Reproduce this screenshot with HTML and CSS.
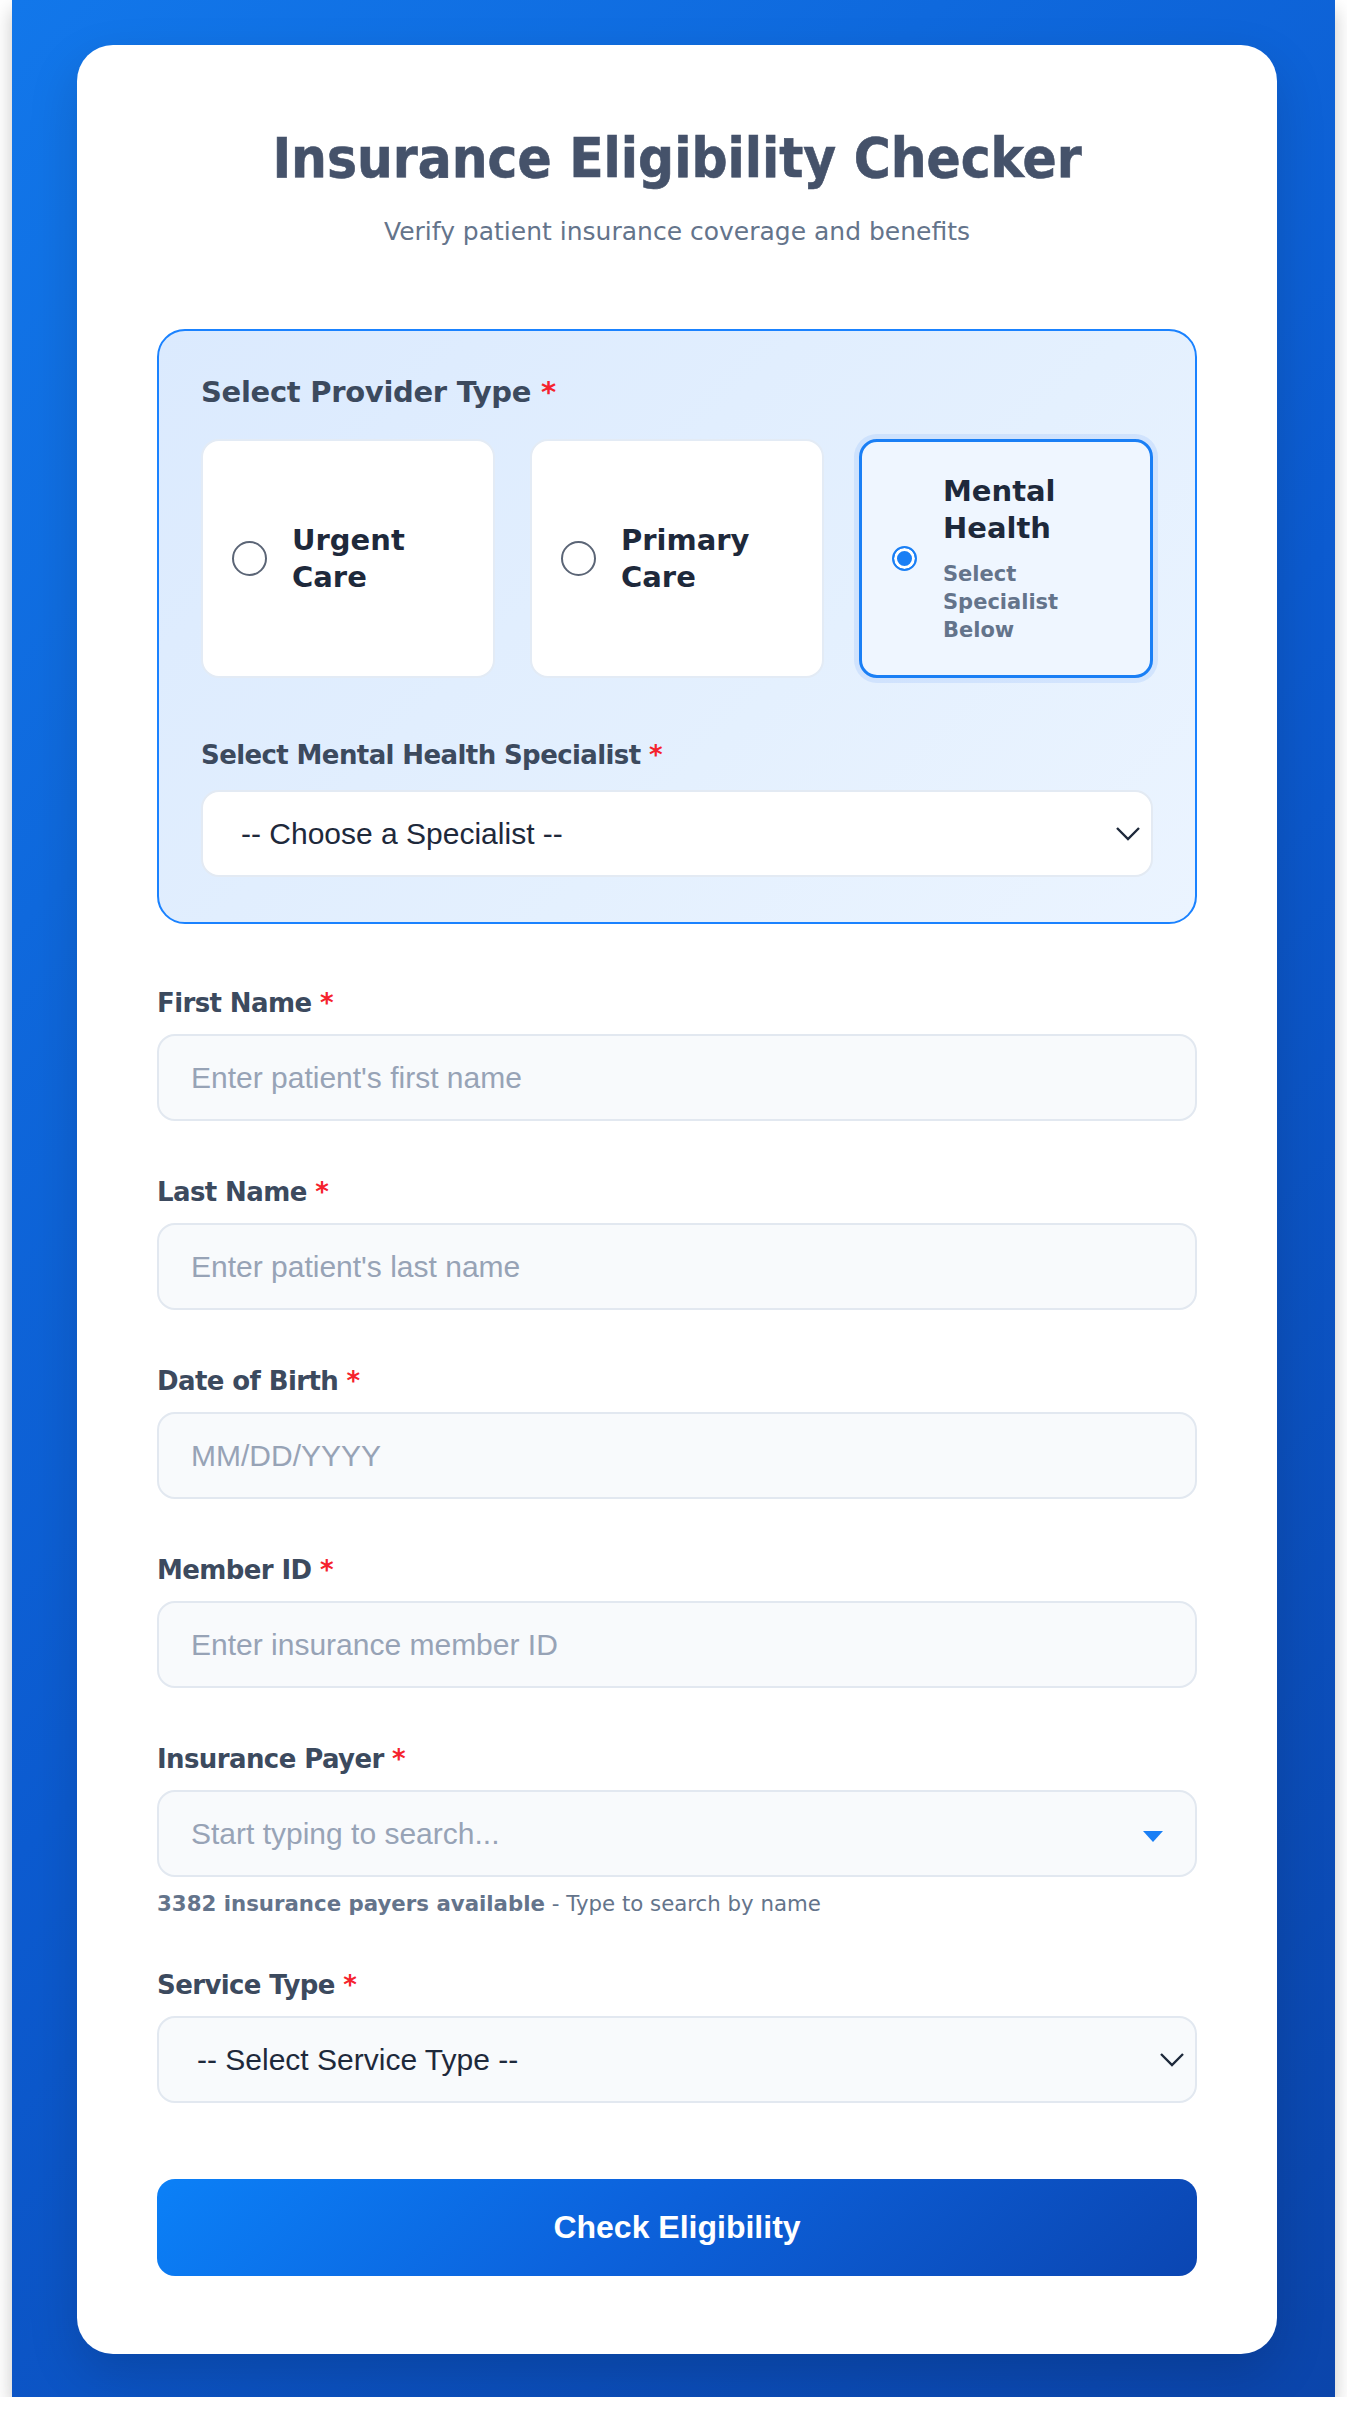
FILE: index.html
```html
<!DOCTYPE html>
<html lang="en">
<head>
    <meta charset="UTF-8">
    <meta name="viewport" content="width=device-width, initial-scale=1.0">
    <title>Insurance Eligibility Checker</title>
    <link rel="stylesheet" href="styles.css">
</head>
<body>

    <div class="frame">
        <div class="container">

            <div class="header">
                <h1>Insurance Eligibility Checker</h1>
                <p class="subtitle">Verify patient insurance coverage and benefits</p>
            </div>

            <div class="provider-box">
                <div class="provider-label">Select Provider Type <span class="req">*</span></div>

                <div class="provider-options">
                    <label class="option">
                        <input type="radio" name="provider" value="urgent">
                        <span class="option-text">
                            <span class="option-title">Urgent Care</span>
                        </span>
                    </label>
                    <label class="option">
                        <input type="radio" name="provider" value="primary">
                        <span class="option-text">
                            <span class="option-title">Primary Care</span>
                        </span>
                    </label>
                    <label class="option selected">
                        <input type="radio" name="provider" value="mental" checked>
                        <span class="option-text">
                            <span class="option-title">Mental Health</span>
                            <span class="option-sub">Select Specialist Below</span>
                        </span>
                    </label>
                </div>

                <label class="field-label specialist-label" for="specialist">Select Mental Health Specialist <span class="req">*</span></label>
                <div class="select-wrap">
                    <select id="specialist" class="field specialist-select">
                        <option>-- Choose a Specialist --</option>
                    </select>
                    <svg class="chevron" width="26" height="16" viewBox="0 0 26 16"><path d="M2 2l11 11L24 2" fill="none" stroke="#1e293b" stroke-width="2.4"/></svg>
                </div>
            </div>

            <div class="form-group">
                <label class="field-label" for="firstName">First Name <span class="req">*</span></label>
                <input type="text" id="firstName" class="field" placeholder="Enter patient's first name">
            </div>

            <div class="form-group">
                <label class="field-label" for="lastName">Last Name <span class="req">*</span></label>
                <input type="text" id="lastName" class="field" placeholder="Enter patient's last name">
            </div>

            <div class="form-group">
                <label class="field-label" for="dob">Date of Birth <span class="req">*</span></label>
                <input type="text" id="dob" class="field" placeholder="MM/DD/YYYY">
            </div>

            <div class="form-group">
                <label class="field-label" for="memberId">Member ID <span class="req">*</span></label>
                <input type="text" id="memberId" class="field" placeholder="Enter insurance member ID">
            </div>

            <div class="form-group">
                <label class="field-label" for="payer">Insurance Payer <span class="req">*</span></label>
                <div class="select-wrap">
                    <input type="text" id="payer" class="field" placeholder="Start typing to search...">
                    <svg class="caret" width="20" height="11" viewBox="0 0 20 11"><path d="M0 0h20L10 11z" fill="#1a7ff5"/></svg>
                </div>
                <div class="helper"><strong>3382 insurance payers available</strong> - Type to search by name</div>
            </div>

            <div class="form-group">
                <label class="field-label" for="serviceType">Service Type <span class="req">*</span></label>
                <div class="select-wrap">
                    <select id="serviceType" class="field">
                        <option>-- Select Service Type --</option>
                    </select>
                    <svg class="chevron" width="26" height="16" viewBox="0 0 26 16"><path d="M2 2l11 11L24 2" fill="none" stroke="#1e293b" stroke-width="2.4"/></svg>
                </div>
            </div>

            <button class="check-button" type="button">Check Eligibility</button>

        </div>
    </div>

</body>
</html>
```

FILE: styles.css
```css
html {
    background-color: #ffffff;
}

body {
    margin: 0;
    font-family: 'DejaVu Sans', sans-serif;
    color: #3c4a5e;
}

.frame {
    margin: 0 12px;
    padding: 45px 58px 43px 65px;
    background: linear-gradient(135deg, #1277ea 0%, #0c5bd0 50%, #0b45ab 100%);
    box-shadow: 0 10px 18px rgba(0, 0, 0, 0.22);
}

.container {
    width: 1200px;
    box-sizing: border-box;
    padding: 80px 80px 78px;
    background-color: #ffffff;
    border-radius: 36px;
    box-shadow: 0 20px 50px rgba(0, 0, 0, 0.15);
}

.header {
    text-align: center;
    margin-bottom: 80px;
}

.header h1 {
    margin: 0;
    font-family: 'DejaVu Sans Condensed', 'DejaVu Sans', sans-serif;
    font-size: 56px;
    line-height: 65px;
    font-weight: bold;
    color: #45526a;
    -webkit-text-stroke: 0.6px #45526a;
}

.subtitle {
    margin: 24px 0 0;
    font-size: 25px;
    line-height: 35px;
    color: #64748b;
}

.req {
    color: #f5222d;
}

/* provider type panel */
.provider-box {
    border: 2px solid #1a82ff;
    border-radius: 28px;
    padding: 42px 42px 45px;
    background: linear-gradient(135deg, #dbeafe 0%, #e4f0fe 60%, #ebf4ff 100%);
    margin-bottom: 62px;
}

.provider-label {
    font-size: 29px;
    line-height: 38px;
    font-weight: bold;
    letter-spacing: -0.3px;
    color: #3c4a5e;
    margin-bottom: 28px;
}

.provider-options {
    display: grid;
    grid-template-columns: repeat(3, 1fr);
    gap: 35px;
    margin-bottom: 60px;
}

.option {
    display: flex;
    align-items: center;
    gap: 25px;
    padding: 32px 29px;
    background-color: #ffffff;
    border: 2px solid #e3ebf5;
    border-radius: 18px;
    cursor: pointer;
}

.option input {
    appearance: none;
    -webkit-appearance: none;
    flex-shrink: 0;
    width: 35px;
    height: 35px;
    margin: 0;
    border: 2px solid #5b6576;
    border-radius: 50%;
    background-color: #ffffff;
}

.option.selected {
    padding: 31px 30px;
    border: 3px solid #1a7ff5;
    background-color: #eff6ff;
    box-shadow: 0 0 0 5px rgba(59, 130, 246, 0.12);
    gap: 26px;
}

.option.selected input {
    width: 25px;
    height: 25px;
    border: 2px solid #1a7ff5;
    background-color: #1a7ff5;
    box-shadow: inset 0 0 0 3px #ffffff;
}

.option-text {
    display: flex;
    flex-direction: column;
}

.option-title {
    font-size: 29px;
    line-height: 37px;
    font-weight: bold;
    color: #1e293b;
}

.option-sub {
    margin-top: 13px;
    font-size: 21px;
    line-height: 28px;
    font-weight: bold;
    color: #64748b;
}

/* form fields */
.form-group {
    margin-bottom: 54px;
}

.field-label {
    display: block;
    font-size: 26px;
    line-height: 34px;
    font-weight: bold;
    letter-spacing: -0.6px;
    color: #3c4a5e;
    margin-bottom: 14px;
}

.specialist-label {
    margin-bottom: 18px;
}

.field {
    display: block;
    width: 100%;
    height: 87px;
    box-sizing: border-box;
    padding: 0 32px;
    border: 2px solid #e2e8f0;
    border-radius: 18px;
    background-color: #f8fafc;
    font-family: 'Liberation Sans', Arial, sans-serif;
    font-size: 30px;
    letter-spacing: 0;
    color: #1e293b;
    outline: none;
}

.field::placeholder {
    color: #97a3b6;
}

select.field {
    appearance: none;
    -webkit-appearance: none;
    padding-left: 38px;
}

.specialist-select {
    background-color: #ffffff;
    border-color: #e3eaf3;
}

.select-wrap {
    position: relative;
}

.chevron {
    position: absolute;
    right: 12px;
    top: 50%;
    margin-top: -8px;
    pointer-events: none;
}

.caret {
    position: absolute;
    right: 34px;
    top: 50%;
    margin-top: -3px;
    pointer-events: none;
}

.helper {
    margin-top: 16px;
    font-size: 21.3px;
    line-height: 21px;
    color: #64748b;
}

.check-button {
    display: block;
    width: 100%;
    height: 97px;
    margin-top: 76px;
    border: none;
    border-radius: 18px;
    background: linear-gradient(135deg, #0b80f7 0%, #0c62dc 45%, #0b46b2 100%);
    color: #ffffff;
    font-family: 'Liberation Sans', Arial, sans-serif;
    font-size: 32px;
    font-weight: bold;
    cursor: pointer;
}
```
